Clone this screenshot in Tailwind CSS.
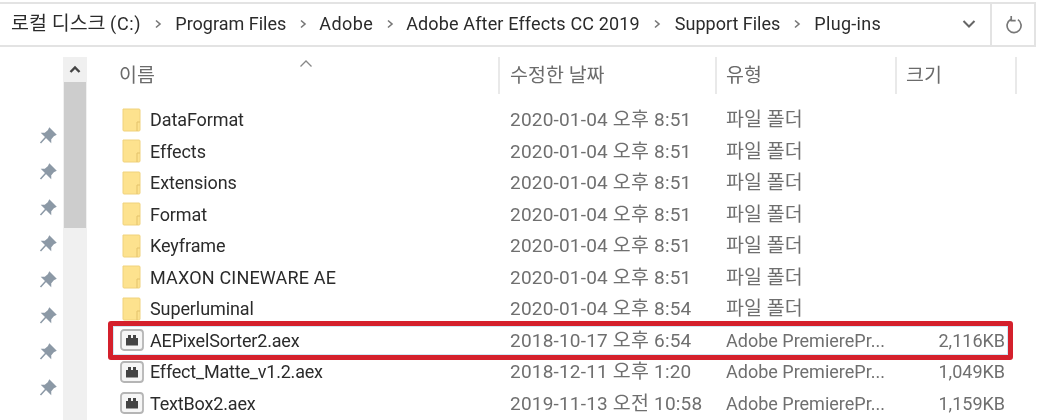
<!doctype html>
<html lang="ko">
<head>
<meta charset="utf-8">
<script src="https://cdn.jsdelivr.net/npm/@tailwindcss/browser@4"></script>
</head>
<body class="w-[1044px] h-[420px] overflow-hidden bg-white font-['Roboto','Noto_Sans_CJK_KR',sans-serif] text-[18px]">
<div class="blur-[0.5px]">
  <div class="flex h-[47px] pt-[2px] pr-[8px] text-[#2b2b2b]">
    <div class="flex-1 flex items-center pb-[2px] pl-[11px] border-y-2 border-r-2 border-[#e3e3e3]">
      <span><span class="text-[19.5px]">로컬 디스크</span> <span class="tracking-[0.7px]">(C:)</span></span>
      <svg class="mx-[13px] w-[8px] h-[10px]" viewBox="0 0 8 10"><path d="M2 1.5 6 5 2 8.5" fill="none" stroke="#777" stroke-width="1.6"/></svg>
      <span>Program Files</span>
      <svg class="mx-[12.5px] w-[8px] h-[10px]" viewBox="0 0 8 10"><path d="M2 1.5 6 5 2 8.5" fill="none" stroke="#777" stroke-width="1.6"/></svg>
      <span class="tracking-[0.4px]">Adobe</span>
      <svg class="mx-[12.5px] w-[8px] h-[10px]" viewBox="0 0 8 10"><path d="M2 1.5 6 5 2 8.5" fill="none" stroke="#777" stroke-width="1.6"/></svg>
      <span class="tracking-[0.15px]">Adobe After Effects CC 2019</span>
      <svg class="mx-[13.5px] w-[8px] h-[10px]" viewBox="0 0 8 10"><path d="M2 1.5 6 5 2 8.5" fill="none" stroke="#777" stroke-width="1.6"/></svg>
      <span>Support Files</span>
      <svg class="mx-[13px] w-[8px] h-[10px]" viewBox="0 0 8 10"><path d="M2 1.5 6 5 2 8.5" fill="none" stroke="#777" stroke-width="1.6"/></svg>
      <span class="tracking-[0.3px]">Plug-ins</span>
      <svg class="ml-auto mr-[14px] w-[14px] h-[10px]" viewBox="0 0 14 10"><path d="M1.5 2 7 7.5 12.5 2" fill="none" stroke="#666" stroke-width="2"/></svg>
    </div>
    <div class="w-[44px] flex items-center justify-center pl-[2px] border-y-2 border-r-2 border-[#e3e3e3]">
      <svg class="w-[18px] h-[20px]" viewBox="0 0 16 18"><path d="M11.5 4.2a6.3 6.3 0 1 1-6.5-.2M5.5 1v4h4" fill="none" stroke="#777" stroke-width="1.5"/></svg>
    </div>
  </div>

  <div class="flex">
    <div class="w-[63px] flex flex-col items-end pt-[78px] pr-[4px] gap-[14px]">
      <svg class="w-[22px] h-[22px] shrink-0" viewBox="0 0 22 22"><path d="M12.5 3.5 18.5 9.5 16.5 10.5 13.5 14 13.5 16.5 5.5 8.5 8 8.5 11.5 5.5ZM8.5 12.5 3.5 18" fill="#8c99a6" stroke="#8c99a6" stroke-width="1.5"/></svg>
      <svg class="w-[22px] h-[22px] shrink-0" viewBox="0 0 22 22"><path d="M12.5 3.5 18.5 9.5 16.5 10.5 13.5 14 13.5 16.5 5.5 8.5 8 8.5 11.5 5.5ZM8.5 12.5 3.5 18" fill="#8c99a6" stroke="#8c99a6" stroke-width="1.5"/></svg>
      <svg class="w-[22px] h-[22px] shrink-0" viewBox="0 0 22 22"><path d="M12.5 3.5 18.5 9.5 16.5 10.5 13.5 14 13.5 16.5 5.5 8.5 8 8.5 11.5 5.5ZM8.5 12.5 3.5 18" fill="#8c99a6" stroke="#8c99a6" stroke-width="1.5"/></svg>
      <svg class="w-[22px] h-[22px] shrink-0" viewBox="0 0 22 22"><path d="M12.5 3.5 18.5 9.5 16.5 10.5 13.5 14 13.5 16.5 5.5 8.5 8 8.5 11.5 5.5ZM8.5 12.5 3.5 18" fill="#8c99a6" stroke="#8c99a6" stroke-width="1.5"/></svg>
      <svg class="w-[22px] h-[22px] shrink-0" viewBox="0 0 22 22"><path d="M12.5 3.5 18.5 9.5 16.5 10.5 13.5 14 13.5 16.5 5.5 8.5 8 8.5 11.5 5.5ZM8.5 12.5 3.5 18" fill="#8c99a6" stroke="#8c99a6" stroke-width="1.5"/></svg>
      <svg class="w-[22px] h-[22px] shrink-0" viewBox="0 0 22 22"><path d="M12.5 3.5 18.5 9.5 16.5 10.5 13.5 14 13.5 16.5 5.5 8.5 8 8.5 11.5 5.5ZM8.5 12.5 3.5 18" fill="#8c99a6" stroke="#8c99a6" stroke-width="1.5"/></svg>
      <svg class="w-[22px] h-[22px] shrink-0" viewBox="0 0 22 22"><path d="M12.5 3.5 18.5 9.5 16.5 10.5 13.5 14 13.5 16.5 5.5 8.5 8 8.5 11.5 5.5ZM8.5 12.5 3.5 18" fill="#8c99a6" stroke="#8c99a6" stroke-width="1.5"/></svg>
      <svg class="w-[22px] h-[22px] shrink-0" viewBox="0 0 22 22"><path d="M12.5 3.5 18.5 9.5 16.5 10.5 13.5 14 13.5 16.5 5.5 8.5 8 8.5 11.5 5.5ZM8.5 12.5 3.5 18" fill="#8c99a6" stroke="#8c99a6" stroke-width="1.5"/></svg>
    </div>

    <div class="w-[24px] h-[373px] mt-[10px] flex flex-col bg-[#f0f0f0]">
      <div class="h-[25px] flex items-center justify-center">
        <svg class="w-[12px] h-[9px]" viewBox="0 0 12 9"><path d="M1.5 7 6 2.5 10.5 7" fill="none" stroke="#444" stroke-width="2.4"/></svg>
      </div>
      <div class="h-[146px] ml-[1px] mr-[1px] bg-[#cdcdcd]"></div>
    </div>

    <div class="flex-1 relative pl-[24px]">
      <svg class="absolute left-[212px] top-[12px] w-[14px] h-[9px]" viewBox="0 0 14 9"><path d="M1.5 7.5 7 2 12.5 7.5" fill="none" stroke="#888" stroke-width="1.3"/></svg>
      <div class="grid grid-cols-[389px_217px_180px_120px] h-[37px] mt-[10px] text-[#6b6b6b] text-[19.5px] leading-[37px]">
        <div class="pl-[8px] border-r-2 border-[#e9e9e9]">이름</div>
        <div class="pl-[10px] border-r-2 border-[#e9e9e9]">수정한 날짜</div>
        <div class="pl-[9px] border-r-2 border-[#e9e9e9]">유형</div>
        <div class="pl-[9px] border-r-2 border-[#e9e9e9]">크기</div>
      </div>
      <div class="mt-[10px] text-[#6f6f6f]">
        <div class="grid grid-cols-[39px_350px_217px_180px_108px] items-center h-[31.5px]">
          <svg class="ml-[11px] w-[20px] h-[24px]" viewBox="0 0 20 24"><path d="M1 1h16q1 0 1 1v20q0 1-1 1H2q-1 0-1-1Z" fill="#fde28e" stroke="#f0d27c"/><path d="M15 23v-9h3" fill="none" stroke="#e3c26a"/></svg>
          <span class="text-[#2b2b2b] tracking-[-0.1px]">DataFormat</span><span class="pl-[10px] text-[19px] tracking-[0.2px]">2020-01-04 <span class="text-[19.5px]">오후</span> 8:51</span><span class="pl-[9px] text-[19.5px]">파일 폴더</span><span></span>
        </div>
        <div class="grid grid-cols-[39px_350px_217px_180px_108px] items-center h-[31.5px]">
          <svg class="ml-[11px] w-[20px] h-[24px]" viewBox="0 0 20 24"><path d="M1 1h16q1 0 1 1v20q0 1-1 1H2q-1 0-1-1Z" fill="#fde28e" stroke="#f0d27c"/><path d="M15 23v-9h3" fill="none" stroke="#e3c26a"/></svg>
          <span class="text-[#2b2b2b] tracking-[-0.1px]">Effects</span><span class="pl-[10px] text-[19px] tracking-[0.2px]">2020-01-04 <span class="text-[19.5px]">오후</span> 8:51</span><span class="pl-[9px] text-[19.5px]">파일 폴더</span><span></span>
        </div>
        <div class="grid grid-cols-[39px_350px_217px_180px_108px] items-center h-[31.5px]">
          <svg class="ml-[11px] w-[20px] h-[24px]" viewBox="0 0 20 24"><path d="M1 1h16q1 0 1 1v20q0 1-1 1H2q-1 0-1-1Z" fill="#fde28e" stroke="#f0d27c"/><path d="M15 23v-9h3" fill="none" stroke="#e3c26a"/></svg>
          <span class="text-[#2b2b2b] tracking-[-0.1px]">Extensions</span><span class="pl-[10px] text-[19px] tracking-[0.2px]">2020-01-04 <span class="text-[19.5px]">오후</span> 8:51</span><span class="pl-[9px] text-[19.5px]">파일 폴더</span><span></span>
        </div>
        <div class="grid grid-cols-[39px_350px_217px_180px_108px] items-center h-[31.5px]">
          <svg class="ml-[11px] w-[20px] h-[24px]" viewBox="0 0 20 24"><path d="M1 1h16q1 0 1 1v20q0 1-1 1H2q-1 0-1-1Z" fill="#fde28e" stroke="#f0d27c"/><path d="M15 23v-9h3" fill="none" stroke="#e3c26a"/></svg>
          <span class="text-[#2b2b2b] tracking-[-0.1px]">Format</span><span class="pl-[10px] text-[19px] tracking-[0.2px]">2020-01-04 <span class="text-[19.5px]">오후</span> 8:51</span><span class="pl-[9px] text-[19.5px]">파일 폴더</span><span></span>
        </div>
        <div class="grid grid-cols-[39px_350px_217px_180px_108px] items-center h-[31.5px]">
          <svg class="ml-[11px] w-[20px] h-[24px]" viewBox="0 0 20 24"><path d="M1 1h16q1 0 1 1v20q0 1-1 1H2q-1 0-1-1Z" fill="#fde28e" stroke="#f0d27c"/><path d="M15 23v-9h3" fill="none" stroke="#e3c26a"/></svg>
          <span class="text-[#2b2b2b] tracking-[-0.1px]">Keyframe</span><span class="pl-[10px] text-[19px] tracking-[0.2px]">2020-01-04 <span class="text-[19.5px]">오후</span> 8:51</span><span class="pl-[9px] text-[19.5px]">파일 폴더</span><span></span>
        </div>
        <div class="grid grid-cols-[39px_350px_217px_180px_108px] items-center h-[31.5px]">
          <svg class="ml-[11px] w-[20px] h-[24px]" viewBox="0 0 20 24"><path d="M1 1h16q1 0 1 1v20q0 1-1 1H2q-1 0-1-1Z" fill="#fde28e" stroke="#f0d27c"/><path d="M15 23v-9h3" fill="none" stroke="#e3c26a"/></svg>
          <span class="text-[#2b2b2b] tracking-[0.18px]">MAXON CINEWARE AE</span><span class="pl-[10px] text-[19px] tracking-[0.2px]">2020-01-04 <span class="text-[19.5px]">오후</span> 8:51</span><span class="pl-[9px] text-[19.5px]">파일 폴더</span><span></span>
        </div>
        <div class="grid grid-cols-[39px_350px_217px_180px_108px] items-center h-[31.5px]">
          <svg class="ml-[11px] w-[20px] h-[24px]" viewBox="0 0 20 24"><path d="M1 1h16q1 0 1 1v20q0 1-1 1H2q-1 0-1-1Z" fill="#fde28e" stroke="#f0d27c"/><path d="M15 23v-9h3" fill="none" stroke="#e3c26a"/></svg>
          <span class="text-[#2b2b2b] tracking-[-0.1px]">Superluminal</span><span class="pl-[10px] text-[19px] tracking-[0.2px]">2020-01-04 <span class="text-[19.5px]">오후</span> 8:54</span><span class="pl-[9px] text-[19.5px]">파일 폴더</span><span></span>
        </div>
        <div class="relative grid grid-cols-[39px_350px_217px_180px_108px] items-center h-[31.5px]">
          <svg class="ml-[9px] w-[24px] h-[22px]" viewBox="0 0 24 22"><rect x="1" y="1" width="22" height="20" rx="3" fill="#f6f6f6" stroke="#b5b5b5" stroke-width="1.8"/><path d="M6 16.5V9h2V6h3v3h2V6h3v3h2v7.5Z" fill="#444"/></svg>
          <span class="text-[#2b2b2b] tracking-[-0.17px]">AEPixelSorter2.aex</span><span class="pl-[10px] text-[19px] tracking-[0.2px]">2018-10-17 <span class="text-[19.5px]">오후</span> 6:54</span><span class="pl-[9px]">Adobe PremierePr...</span><span class="text-right">2,116KB</span>
          <div class="absolute left-[-3px] top-[-4px] w-[905px] h-[39px] border-[5px] border-[#d4202c] rounded-[3px] shadow-[inset_0_0_0_1px_#cfe8f5]"></div>
        </div>
        <div class="grid grid-cols-[39px_350px_217px_180px_108px] items-center h-[31.5px]">
          <svg class="ml-[9px] w-[24px] h-[22px]" viewBox="0 0 24 22"><rect x="1" y="1" width="22" height="20" rx="3" fill="#f6f6f6" stroke="#b5b5b5" stroke-width="1.8"/><path d="M6 16.5V9h2V6h3v3h2V6h3v3h2v7.5Z" fill="#444"/></svg>
          <span class="text-[#2b2b2b] tracking-[-0.2px]">Effect_Matte_v1.2.aex</span><span class="pl-[10px] text-[19px] tracking-[0.2px]">2018-12-11 <span class="text-[19.5px]">오후</span> 1:20</span><span class="pl-[9px]">Adobe PremierePr...</span><span class="text-right">1,049KB</span>
        </div>
        <div class="grid grid-cols-[39px_350px_217px_180px_108px] items-center h-[31.5px]">
          <svg class="ml-[9px] w-[24px] h-[22px]" viewBox="0 0 24 22"><rect x="1" y="1" width="22" height="20" rx="3" fill="#f6f6f6" stroke="#b5b5b5" stroke-width="1.8"/><path d="M6 16.5V9h2V6h3v3h2V6h3v3h2v7.5Z" fill="#444"/></svg>
          <span class="text-[#2b2b2b] tracking-[-0.17px]">TextBox2.aex</span><span class="pl-[10px] text-[19px] tracking-[0.2px]">2019-11-13 <span class="text-[19.5px]">오전</span> 10:58</span><span class="pl-[9px]">Adobe PremierePr...</span><span class="text-right">1,159KB</span>
        </div>
      </div>
    </div>
  </div>
</div>
</body>
</html>
